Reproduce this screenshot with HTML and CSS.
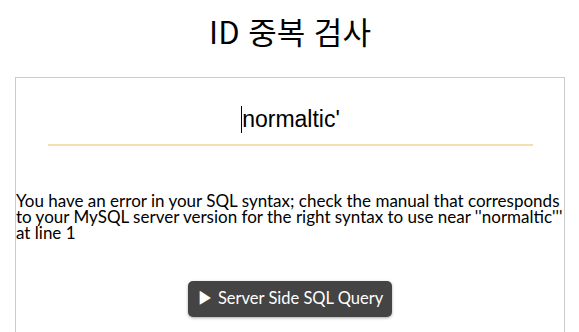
FILE: index.html
```html
<!DOCTYPE html>
<html lang="ko">
<head>
  <meta charset="UTF-8">
  <meta name="viewport" content="width=device-width, initial-scale=1.0">
  <title>ID 중복 검사</title>
  <link rel="stylesheet" href="styles.css">
</head>
<body>
  <h1>ID 중복 검사</h1>
  <div class="box">
    <div class="id-field"><span class="caret"></span>normaltic'</div>
    <p class="error">You have an error in your SQL syntax; check the manual that corresponds to your MySQL server version for the right syntax to use near ''normaltic''' at line 1</p>
    <div class="actions">
      <button class="query-btn">&#9654; Server Side SQL Query</button>
    </div>
  </div>
</body>
</html>
```
FILE: styles.css
```css
body {
  font-family: Lato, "Noto Sans CJK KR", sans-serif;
  background-color: #fff;
  margin: 0;
  padding: 0 14px 0 15px;
  color: #000;
}
h1 {
  font-family: "Noto Sans CJK KR", sans-serif;
  font-weight: normal;
  font-size: 31px;
  text-align: center;
  margin: 0;
  padding-top: 9px;
  height: 68px;
  line-height: 44px;
}
.box {
  border: 1px solid #ccc;
  height: 300px;
}
.id-field {
  margin: 26px 31px 0 32px;
  border-bottom: 2px solid #f5deb3;
  font-family: "Liberation Sans", Arial, sans-serif;
  font-size: 23px;
  text-align: center;
  height: 40px;
  line-height: 30px;
}
.caret {
  display: inline-block;
  width: 1px;
  height: 27px;
  background: #000;
  vertical-align: -6px;
}
.error {
  margin: 47px 0 0;
  font-size: 17px;
  line-height: 16px;
}
.actions {
  text-align: center;
  margin-top: 40px;
}
.query-btn {
  font-family: Lato, sans-serif;
  font-size: 16.5px;
  color: #fff;
  background: #444;
  border: none;
  border-radius: 5px;
  padding: 0 9px;
  height: 36px;
  box-shadow: 0 1px 3px rgba(0, 0, 0, 0.35);
}
```
